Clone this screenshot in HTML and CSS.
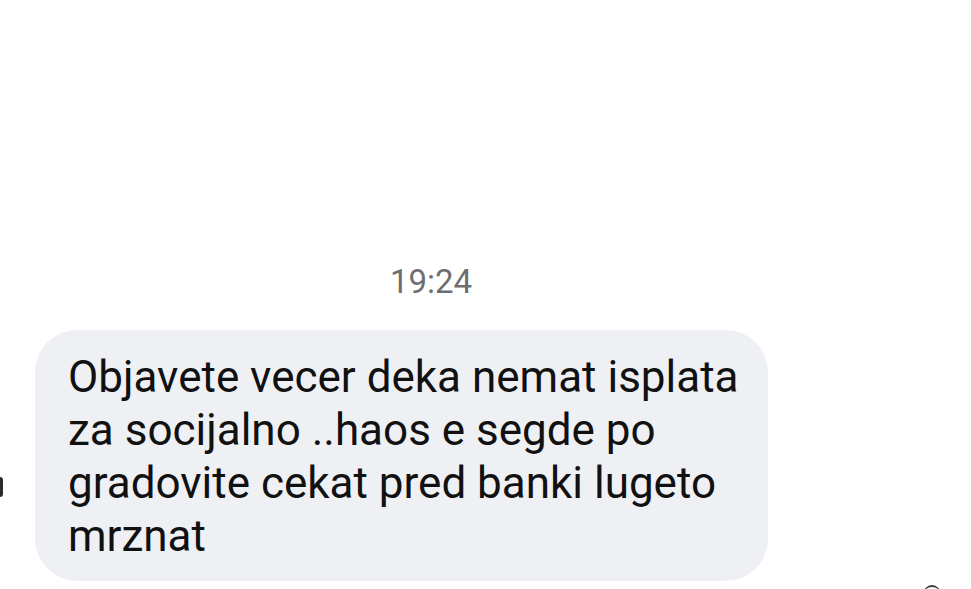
FILE: index.html
```html
<!DOCTYPE html>
<html lang="en">
<head>
    <meta charset="UTF-8">
    <meta name="viewport" content="width=device-width, initial-scale=1.0">
    <title>Messages</title>
    <link rel="stylesheet" href="styles.css">
</head>
<body>
    <div class="thread">
        <div class="timestamp">19:24</div>

        <div class="message-row">
            <div class="avatar-edge"></div>
            <div class="bubble">Objavete vecer deka nemat isplata za socijalno ..haos e segde po gradovite cekat pred banki lugeto mrznat</div>
        </div>

        <div class="next-row">
            <div class="next-icon"></div>
        </div>
    </div>
</body>
</html>
```

FILE: styles.css
```css
html, body {
    margin: 0;
    padding: 0;
    background-color: #fff;
    overflow: hidden;
}

body {
    font-family: Roboto, "Noto Sans", sans-serif;
    width: 971px;
    height: 589px;
}

.thread {
    display: flex;
    flex-direction: column;
    padding-top: 263px;
}

.timestamp {
    font-size: 33px;
    line-height: 38px;
    color: #6d6e72;
    text-align: center;
    padding-right: 109px;
}

.message-row {
    display: flex;
    align-items: flex-end;
    gap: 32px;
    margin-top: 29px;
}

.avatar-edge {
    width: 3px;
    height: 20px;
    background-color: #2b2b2b;
    border-radius: 0 3px 3px 0;
    margin-bottom: 84px;
}

.bubble {
    width: 733px;
    box-sizing: border-box;
    padding: 21px 20px 18px 33px;
    background-color: #eff0f4;
    border-radius: 42px;
    font-size: 44px;
    line-height: 53px;
    color: #111;
}

.next-row {
    display: flex;
    justify-content: flex-end;
    padding-right: 30px;
    margin-top: 4px;
}

.next-icon {
    width: 18px;
    height: 18px;
    border-top: 2px solid #3a3a3a;
    border-radius: 50%;
}
```
